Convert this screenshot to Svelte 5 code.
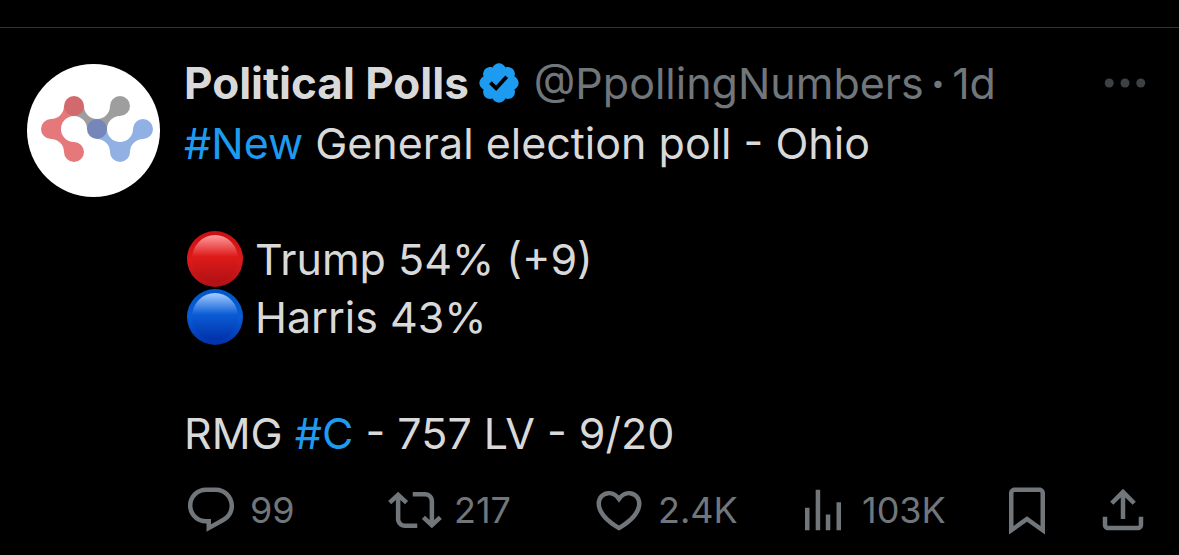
<script>
  const post = {
    name: 'Political Polls',
    handle: '@PpollingNumbers',
    age: '1d',
  }

  const VERIFIED = 'M20.396 11c-.018-.646-.215-1.275-.57-1.816-.354-.54-.852-.972-1.438-1.246.223-.607.27-1.264.14-1.897-.131-.634-.437-1.218-.882-1.687-.47-.445-1.053-.75-1.687-.882-.633-.13-1.29-.083-1.897.14-.273-.587-.704-1.086-1.245-1.44S11.647 1.62 11 1.604c-.646.017-1.273.213-1.813.568s-.969.854-1.24 1.44c-.608-.223-1.267-.272-1.902-.14-.635.13-1.22.436-1.69.882-.445.47-.749 1.055-.878 1.688-.13.633-.08 1.29.144 1.896-.587.274-1.087.705-1.443 1.245-.356.54-.555 1.17-.574 1.817.02.647.218 1.276.574 1.817.356.54.856.972 1.443 1.245-.224.606-.274 1.263-.144 1.896.13.634.433 1.218.877 1.688.47.443 1.054.747 1.687.878.633.132 1.29.084 1.897-.136.274.586.705 1.084 1.246 1.439.54.354 1.17.551 1.816.569.647-.016 1.276-.213 1.817-.567s.972-.854 1.245-1.44c.604.239 1.266.296 1.903.164.636-.132 1.22-.447 1.68-.907.46-.46.776-1.044.908-1.681s.075-1.299-.165-1.903c.586-.274 1.084-.705 1.439-1.246.354-.54.551-1.17.569-1.816zM9.662 14.85l-3.429-3.428 1.293-1.302 2.072 2.072 4.4-4.794 1.347 1.246z'

  const actions = [
    {
      label: 'Reply',
      count: '99',
      icon: 'M1.751 10c0-4.42 3.584-8 8.005-8h4.366c4.49 0 8.129 3.64 8.129 8.13 0 2.96-1.607 5.68-4.196 7.11l-8.054 4.46v-3.69h-.067c-4.49.1-8.183-3.51-8.183-8.01zm8.005-6c-3.317 0-6.005 2.69-6.005 6 0 3.37 2.77 6.08 6.138 6.01l.351-.01h1.761v2.3l5.087-2.81c1.951-1.08 3.163-3.13 3.163-5.36 0-3.39-2.744-6.13-6.129-6.13H9.756z',
    },
    {
      label: 'Repost',
      count: '217',
      icon: 'M4.5 3.88l4.432 4.14-1.364 1.46L5.5 7.55V16c0 1.1.896 2 2 2H13v2H7.5c-2.209 0-4-1.79-4-4V7.55L1.432 9.48.068 8.02 4.5 3.88zM16.5 6H11V4h5.5c2.209 0 4 1.79 4 4v8.45l2.068-1.93 1.364 1.46-4.432 4.14-4.432-4.14 1.364-1.46 2.068 1.93V8c0-1.1-.896-2-2-2z',
    },
    {
      label: 'Like',
      count: '2.4K',
      icon: 'M16.697 5.5c-1.222-.06-2.679.51-3.89 2.16l-.805 1.09-.806-1.09C9.984 6.01 8.526 5.44 7.304 5.5c-1.243.07-2.349.78-2.91 1.91-.552 1.12-.633 2.78.479 4.82 1.074 1.97 3.257 4.27 7.129 6.61 3.87-2.34 6.052-4.64 7.126-6.61 1.111-2.04 1.03-3.7.477-4.82-.561-1.13-1.666-1.84-2.908-1.91zm4.187 7.69c-1.351 2.48-4.001 5.12-8.379 7.67l-.503.3-.504-.3c-4.379-2.55-7.029-5.19-8.382-7.67-1.36-2.5-1.41-4.86-.514-6.67.887-1.79 2.647-2.91 4.601-3.01 1.651-.09 3.368.56 4.798 2.01 1.429-1.45 3.146-2.1 4.796-2.01 1.954.1 3.714 1.22 4.601 3.01.896 1.81.846 4.17-.514 6.67z',
    },
    {
      label: 'Views',
      count: '103K',
      icon: 'M8.75 21V3h2v18h-2zM18 21V8.5h2V21h-2zM4 21l.004-10h2L6 21H4zm9.248 0v-7h2v7h-2z',
    },
    {
      label: 'Bookmark',
      icon: 'M4 4.5C4 3.12 5.119 2 6.5 2h11C18.881 2 20 3.12 20 4.5v18.44l-8-5.71-8 5.71V4.5zM6.5 4c-.276 0-.5.22-.5.5v14.56l6-4.29 6 4.29V4.5c0-.28-.224-.5-.5-.5h-11z',
    },
    {
      label: 'Share',
      icon: 'M12 2.59l5.7 5.7-1.41 1.42L13 6.41V16h-2V6.41l-3.3 3.3-1.41-1.42L12 2.59zM21 15l-.02 3.51c0 1.38-1.12 2.49-2.5 2.49H5.5C4.11 21 3 19.88 3 18.5V15h2v3.5c0 .28.22.5.5.5h12.98c.28 0 .5-.22.5-.5L19 15h2z',
    },
  ]

  // Avatar molecule: nodes of radius R, joined on the diagonal by necks
  const R = 10
  const STEP = 23
  const Q = STEP - R

  function neck(ax, ay, sy) {
    const bx = ax + STEP
    const by = ay + sy * STEP
    const sweep = sy > 0 ? 1 : 0
    return `M${ax} ${ay + sy * R}A${Q} ${Q} 0 0 ${sweep} ${bx - R} ${by}H${bx}V${by - sy * R}` +
      `A${Q} ${Q} 0 0 ${sweep} ${ax + R} ${ay}H${ax}Z`
  }

  const molecule = [
    { color: '#9e9e9e', nodes: [[93, 42]], necks: [[47, 42, 1], [70, 65, -1]] },
    { color: '#91b0e3', nodes: [[93, 88], [116, 65]], necks: [[70, 65, 1], [93, 88, -1]] },
    { color: '#e5787b', nodes: [[24, 65], [47, 88]], necks: [[24, 65, -1], [24, 65, 1]] },
    { color: '#d26a6d', nodes: [[47, 42]], necks: [] },
    { color: '#7686b8', nodes: [[70, 65]], necks: [] },
  ]
</script>

{#snippet ball(id, rim, top, mid, low)}
  <svg class="ball" viewBox="0 0 56 56" aria-hidden="true">
    <defs>
      <linearGradient id="{id}-body" x1="0" y1="0" x2="0" y2="1">
        <stop offset="0" stop-color={rim} />
        <stop offset="0.5" stop-color={mid} />
        <stop offset="1" stop-color={low} />
      </linearGradient>
      <linearGradient id="{id}-shine" x1="0" y1="0" x2="0" y2="1">
        <stop offset="0" stop-color={top} />
        <stop offset="0.45" stop-color={mid} />
        <stop offset="1" stop-color={low} />
      </linearGradient>
    </defs>
    <circle cx="28" cy="28" r="28" fill="url(#{id}-body)" />
    <ellipse cx="28" cy="28" rx="23" ry="24" fill="url(#{id}-shine)" />
  </svg>
{/snippet}

<article class="post">
  <a class="avatar" href="#profile" aria-label={post.name}>
    <svg viewBox="0 0 133 133" aria-hidden="true">
      <circle cx="66.5" cy="66.5" r="66.5" fill="#fff" />
      {#each molecule as part}
        <g fill={part.color}>
          {#each part.necks as [x, y, sy]}
            <path d={neck(x, y, sy)} />
          {/each}
          {#each part.nodes as [x, y]}
            <circle cx={x} cy={y} r={R} />
          {/each}
        </g>
      {/each}
    </svg>
  </a>

  <div class="content">
    <header class="head">
      <a class="name" href="#profile">{post.name}</a>
      <svg class="verified" viewBox="0 0 22 22" role="img" aria-label="Verified account">
        <path d={VERIFIED} />
      </svg>
      <span class="meta">{post.handle}</span>
      <span class="meta dot">·</span>
      <span class="meta">{post.age}</span>
      <button class="more" aria-label="More">
        <svg class="icon" viewBox="0 0 24 24" aria-hidden="true">
          <circle cx="5" cy="12" r="2" />
          <circle cx="12" cy="12" r="2" />
          <circle cx="19" cy="12" r="2" />
        </svg>
      </button>
    </header>

    <div class="body">
      <p><a href="#new">#New</a> General election poll - Ohio</p>
      <ul class="results">
        <li>{@render ball('red', '#c80f14', '#ff9c9c', '#de1a1a', '#b01114')}Trump 54% (+9)</li>
        <li>{@render ball('blue', '#0057c8', '#a6cdff', '#0a5cd6', '#0030a8')}Harris 43%</li>
      </ul>
      <p>RMG <a href="#c">#C</a> - 757 LV - 9/20</p>
    </div>

    <div class="actions">
      {#each actions as action}
        <button class="action" aria-label={action.label}>
          <svg class="icon" viewBox="0 0 24 24" aria-hidden="true">
            <path d={action.icon} />
          </svg>
          {#if action.count}<span>{action.count}</span>{/if}
        </button>
      {/each}
    </div>
  </div>
</article>

<style>
  :global(body) {
    background: #000;
  }

  .post {
    display: flex;
    gap: 24px;
    margin-top: 27px;
    padding: 26px 27px 18px;
    border-top: 1px solid #2f3336;
    font-family: Inter, 'Liberation Sans', sans-serif;
    font-size: 43px;
    line-height: 58px;
    color: #d9d9d9;
  }

  .avatar {
    flex: none;
    width: 133px;
    padding-top: 10px;
  }

  .avatar svg {
    display: block;
  }

  .content {
    flex: 1;
    min-width: 0;
  }

  a {
    color: #1d9bf0;
    text-decoration: none;
  }

  button {
    padding: 0;
    border: 0;
    background: none;
    color: #71767b;
    font: inherit;
    cursor: pointer;
  }

  .icon {
    display: block;
    flex: none;
    width: 54px;
    height: 54px;
    fill: currentColor;
  }

  .head {
    display: flex;
    align-items: center;
    height: 58px;
    margin-bottom: 2px;
    white-space: nowrap;
  }

  .name {
    color: #d9d9d9;
    font-size: 44px;
    font-weight: 700;
  }

  .verified {
    flex: none;
    width: 46px;
    height: 46px;
    margin: 0 12px 0 7px;
    fill: #1d9bf0;
  }

  .meta {
    color: #71767b;
  }

  .dot {
    margin: 0 7px;
    font-weight: 700;
  }

  .more {
    margin-left: auto;
    color: #3e4144;
  }

  p,
  .results {
    margin: 0;
  }

  .results {
    padding: 58px 0;
    list-style: none;
  }

  .results li {
    display: flex;
    align-items: center;
    gap: 12px;
  }

  .ball {
    flex: none;
    width: 56px;
    height: 56px;
    margin-left: 3px;
  }

  .actions {
    display: grid;
    grid-template-columns: repeat(4, 1fr) 96px 54px;
    margin-top: 21px;
    padding-right: 2px;
  }

  .action {
    display: flex;
    align-items: center;
    gap: 12px;
    font-size: 36px;
    line-height: 54px;
  }
</style>
